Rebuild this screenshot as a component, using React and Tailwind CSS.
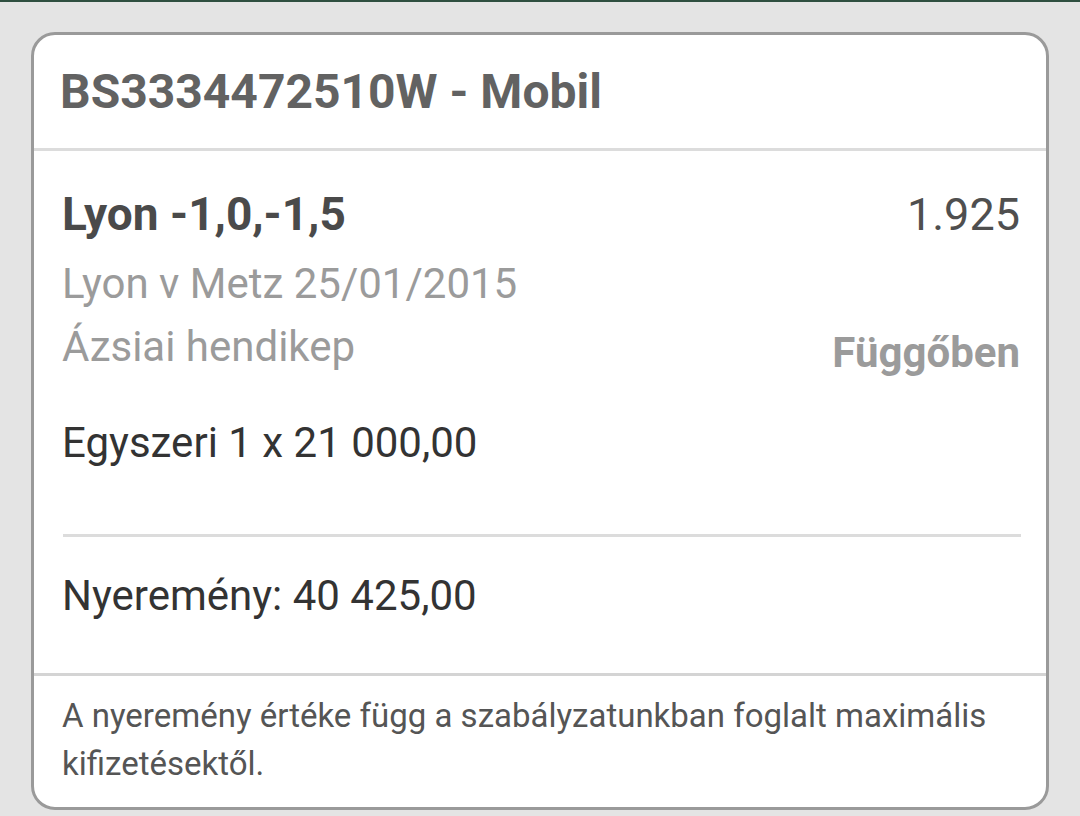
export default function App() {
  return (
    <div className="min-h-[816px] w-full bg-[#e4e4e4] font-['Roboto',sans-serif]">
      <div className="h-[2px] w-full bg-[#2f4f40]" />
      <div className="mx-[31px] mt-[30px] overflow-hidden rounded-[24px] border-[3px] border-[#9a9a9a] bg-white">
        <div className="flex h-[113px] items-center px-[26px]">
          <h1 className="text-[48px] font-bold leading-none text-[#626262]">BS3334472510W - Mobil</h1>
        </div>
        <div className="h-[3px] bg-[#dcdcdc]" />

        <div className="pl-[28px] pr-[26px] pt-[32px]">
          <div className="flex items-start justify-between">
            <span className="text-[46px] font-bold leading-[63px] text-[#4a4a4a]">Lyon -1,0,-1,5</span>
            <span className="text-[45px] leading-[63px] text-[#4f4f4f]">1.925</span>
          </div>
          <div className="mt-[6px] text-[42px] leading-[63px] text-[#9b9b9b]">Lyon v Metz 25/01/2015</div>
          <div className="flex items-start justify-between">
            <span className="text-[42px] leading-[63px] text-[#9b9b9b]">Ázsiai hendikep</span>
            <span className="pt-[6px] text-[42px] font-bold leading-[63px] text-[#9b9b9b]">Függőben</span>
          </div>
          <div className="mt-[27px] text-[42px] leading-[63px] text-[#333333]">Egyszeri 1 x 21 000,00</div>
          <div className="mr-[-1px] ml-[1px] mt-[60px] h-[3px] bg-[#dcdcdc]" />
          <div className="mt-[27px] text-[42px] leading-[63px] text-[#333333]">Nyeremény: 40 425,00</div>
        </div>

        <div className="mt-[46px] h-[3px] bg-[#d4d4d4]" />
        <div className="pl-[28px] pr-[26px] pb-[19px] pt-[16px] text-[33px] leading-[48px] text-[#555555]">
          A nyeremény értéke függ a szabályzatunkban foglalt maximális kifizetésektől.
        </div>
      </div>
    </div>
  );
}
